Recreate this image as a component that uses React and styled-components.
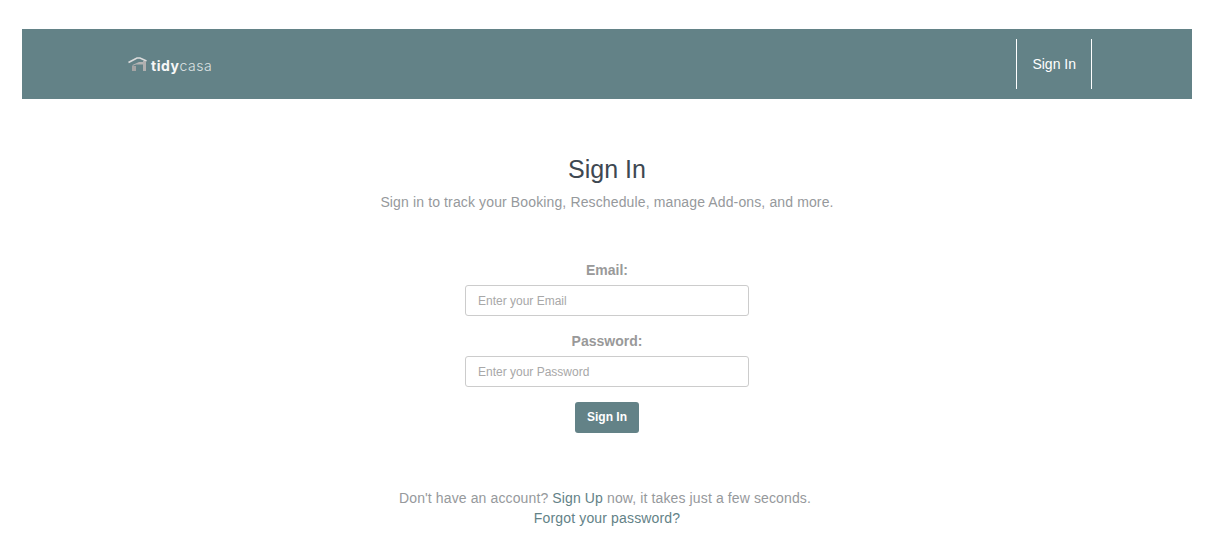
import React from "react";
import styled, { createGlobalStyle } from "styled-components";

const GlobalStyle = createGlobalStyle`
  html, body {
    margin: 0;
    background: #fff;
    font-family: "Liberation Sans", Arial, sans-serif;
  }
`;

function Logo() {
  return (
    <LogoWrap>
      <svg width="20" height="14" viewBox="0 0 20 14">
        <path d="M0.5 5.5 L9 1 H12 L18.5 4" fill="none" stroke="#dcdcdc" strokeWidth="1.6" />
        <path d="M4.5 8 L11 5 H15 V7.5 H8 L4.5 9 Z" fill="#b4b4b4" />
        <path d="M4 9 H8 V14 H4 Z" fill="#a4a4a4" />
        <path d="M15 4 H18 V14 H15 Z" fill="#b0b0b0" />
      </svg>
      <LogoText>
        <b>tidy</b>casa
      </LogoText>
    </LogoWrap>
  );
}

export default function App() {
  return (
    <Page>
      <GlobalStyle />
      <Header>
        <Logo />
        <NavLink href="#">Sign In</NavLink>
      </Header>

      <Main>
        <Title>Sign In</Title>
        <Subtitle>Sign in to track your Booking, Reschedule, manage Add-ons, and more.</Subtitle>

        <Form onSubmit={e => e.preventDefault()}>
          <Label>Email:</Label>
          <Input type="text" placeholder="Enter your Email" />
          <Label>Password:</Label>
          <Input type="password" placeholder="Enter your Password" />
          <SubmitButton type="submit">Sign In</SubmitButton>
        </Form>

        <Footnote>
          Don't have an account? <FootLink href="#">Sign Up</FootLink> now, it takes just a few seconds.
        </Footnote>
        <Forgot href="#">Forgot your password?</Forgot>
      </Main>
    </Page>
  );
}

const Page = styled.div`
  padding: 29px 19px 0 22px;
`;

const Header = styled.header`
  display: flex;
  align-items: center;
  justify-content: space-between;
  height: 70px;
  padding: 0 100px 0 106px;
  background: #638287;
`;

const LogoWrap = styled.div`
  display: flex;
  align-items: center;
  gap: 3px;
`;

const LogoText = styled.span`
  padding-top: 2px;
  font-family: Inter, sans-serif;
  font-size: 14px;
  letter-spacing: 0.55px;
  font-weight: 300;
  color: #dfe3e3;

  b {
    font-weight: 700;
    color: #f7f7f7;
  }
`;

const NavLink = styled.a`
  display: flex;
  align-items: center;
  height: 50px;
  padding: 0 15px;
  border-left: 1px solid #fff;
  border-right: 1px solid #fff;
  color: #fff;
  font-size: 14px;
  text-decoration: none;
`;

const Main = styled.main`
  display: flex;
  flex-direction: column;
  align-items: center;
  width: 1170px;
`;

const Title = styled.h1`
  margin: 56px 0 0;
  font-size: 25px;
  line-height: 28px;
  font-weight: 400;
  color: #3e4852;
`;

const Subtitle = styled.p`
  margin: 9px 0 0;
  font-size: 14px;
  line-height: 20px;
  letter-spacing: 0.13px;
  color: #96999c;
`;

const Form = styled.form`
  display: flex;
  flex-direction: column;
  align-items: center;
  margin-top: 50px;
`;

const Label = styled.label`
  margin-bottom: 7px;
  font-size: 14px;
  line-height: 16px;
  font-weight: 700;
  color: #999;
`;

const Input = styled.input`
  box-sizing: border-box;
  width: 284px;
  height: 31px;
  margin-bottom: 17px;
  padding: 0 12px;
  border: 1px solid #ccc;
  border-radius: 3px;
  font-family: inherit;
  font-size: 12px;
  color: #555;

  &::placeholder {
    color: #a8a8a8;
    opacity: 1;
  }
`;

const SubmitButton = styled.button`
  width: 64px;
  height: 31px;
  margin-top: -2px;
  padding: 0 0 2px;
  border: none;
  border-radius: 3px;
  background: #638287;
  color: #fff;
  font-family: inherit;
  font-size: 12px;
  font-weight: 700;
`;

const Footnote = styled.p`
  margin: 55px 0 0;
  padding-right: 4px;
  font-size: 14px;
  line-height: 20px;
  letter-spacing: 0.12px;
  color: #96999c;
`;

const FootLink = styled.a`
  color: #638287;
  text-decoration: none;
`;

const Forgot = styled.a`
  font-size: 14px;
  line-height: 20px;
  letter-spacing: 0.15px;
  color: #638287;
  text-decoration: none;
`;
